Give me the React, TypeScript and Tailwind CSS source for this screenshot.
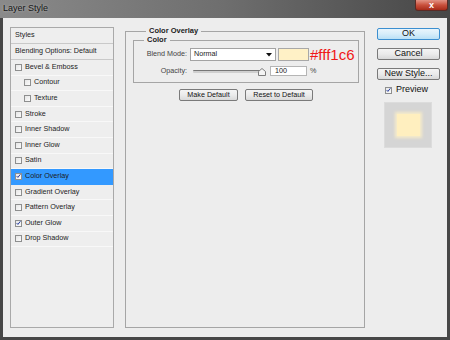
import React from 'react';

const FONT = { fontFamily: '"Liberation Sans", Arial, sans-serif' };

type StyleItem = { label: string; checked?: boolean; indent?: boolean; selected?: boolean };

const styleItems: StyleItem[] = [
  { label: 'Bevel & Emboss' },
  { label: 'Contour', indent: true },
  { label: 'Texture', indent: true },
  { label: 'Stroke' },
  { label: 'Inner Shadow' },
  { label: 'Inner Glow' },
  { label: 'Satin' },
  { label: 'Color Overlay', checked: true, selected: true },
  { label: 'Gradient Overlay' },
  { label: 'Pattern Overlay' },
  { label: 'Outer Glow', checked: true },
  { label: 'Drop Shadow' },
];

const Checkbox = ({ checked }: { checked?: boolean }) => (
  <span className="flex h-[7px] w-[7px] shrink-0 items-center justify-center border border-[#8e8f8f] bg-gradient-to-br from-[#e6e6e6] to-[#fbfbfb]">
    {checked && (
      <svg width="6" height="6" viewBox="0 0 6 6">
        <path d="M0.8 3.1 L2.3 4.7 L5.3 0.9" fill="none" stroke="#21399e" strokeWidth="1.2" />
      </svg>
    )}
  </span>
);

const Button = ({ children, className }: { children: React.ReactNode; className?: string }) => (
  <div
    className={`flex items-center justify-center rounded-[2px] border border-[#7a7a7a] bg-gradient-to-b from-[#f4f4f4] via-[#ebebeb] to-[#d9d9d9] text-[#111] ${className ?? ''}`}
  >
    {children}
  </div>
);

export default function App() {
  return (
    <div className="flex h-[340px] w-[450px] flex-col bg-[#474747]" style={FONT}>
      {/* title bar */}
      <div className="flex h-[18px] shrink-0 items-start justify-between bg-gradient-to-r from-[#8a8a8a] via-[#6e6e6e] to-[#474747]">
        <span className="pl-[3px] pt-[3px] text-[9px] leading-[11px] text-[#151515] [text-shadow:0_0_3px_rgba(255,255,255,0.45)]">
          Layer Style
        </span>
        <div className="mr-[2px] flex h-[11px] w-[33px] items-center justify-center rounded-b-[3px] border border-t-0 border-[#5b2a24] bg-gradient-to-b from-[#e29385] via-[#c9503c] to-[#a72a18]">
          <span className="text-[9px] font-bold leading-[9px] text-white">x</span>
        </div>
      </div>

      {/* body */}
      <div className="mx-[3px] mb-[3px] flex flex-1 bg-[#ededed] pb-[9px] pl-[7px] pr-[7px] pt-[9px]">
        {/* styles list */}
        <div className="flex w-[104px] flex-col border border-[#a9a9a9] bg-[#eeeeee] text-[7.2px] text-[#1c1c1c]">
          <div className="flex h-[16px] items-center border-b border-[#c9c9c9] pl-[4px]">Styles</div>
          <div className="flex h-[16px] items-center border-b border-[#c9c9c9] pl-[4px]">Blending Options: Default</div>
          {styleItems.map((item) => (
            <div
              key={item.label}
              className={`flex h-[15.6px] items-center gap-[3px] border-b ${
                item.selected ? 'border-[#3399ff] bg-[#3399ff]' : 'border-[#f8f8f8]'
              } ${item.indent ? 'pl-[13px]' : 'pl-[4px]'}`}
            >
              <Checkbox checked={item.checked} />
              <span>{item.label}</span>
            </div>
          ))}
        </div>

        {/* main group */}
        <fieldset className="ml-[11px] flex w-[240px] flex-col border border-[#a5a5a5] pl-[7px] pr-[5px]">
          <legend className="ml-[13px] px-[3px] text-[7.5px] font-bold leading-[8px] text-[#1c1c1c]">Color Overlay</legend>
          <fieldset className="mt-[1px] border border-[#a5a5a5] pb-[6px] pt-[4px] text-[7.2px] text-[#1c1c1c]">
            <legend className="ml-[10px] px-[3px] text-[7.5px] font-bold leading-[8px]">Color</legend>
            <div className="flex h-[13px] items-center">
              <span className="w-[53px] text-right text-[#444]">Blend Mode:</span>
              <div className="ml-[3px] flex h-[13px] w-[86px] items-center justify-between border border-[#a3a3a3] bg-white pl-[3px] pr-[3px]">
                <span>Normal</span>
                <svg width="6" height="4" viewBox="0 0 6 4">
                  <path d="M0 0 H6 L3 3.5 Z" fill="#111" />
                </svg>
              </div>
              <div className="ml-[2px] h-[13px] w-[31px] border border-[#a8a8a8] bg-[#fff1c6]" />
              <span className="ml-[1px] text-[15px] leading-[15px] text-[#f01818]">#fff1c6</span>
            </div>
            <div className="mt-[5px] flex h-[10px] items-center">
              <span className="w-[53px] text-right text-[#444]">Opacity:</span>
              <div className="relative ml-[6px] flex h-[10px] w-[74px] items-center">
                <div className="h-[3px] w-[70px] rounded-[1px] border-t border-[#777] bg-[#cfcfcf]" />
                <svg className="absolute left-[65px] top-[2px]" width="8" height="8" viewBox="0 0 8 8">
                  <path d="M0.5 7.5 V3.5 L4 0.5 L7.5 3.5 V7.5 Z" fill="#f4f4f4" stroke="#7d7d7d" strokeWidth="1" />
                </svg>
              </div>
              <div className="ml-[3px] flex h-[10px] w-[37px] items-center border border-[#b5b5b5] bg-white pl-[4px]">100</div>
              <span className="ml-[3px] text-[#444]">%</span>
            </div>
          </fieldset>
          <div className="mt-[6px] flex justify-center gap-[7px] text-[7.2px]">
            <Button className="h-[12px] w-[59px]">Make Default</Button>
            <Button className="h-[12px] w-[68px]">Reset to Default</Button>
          </div>
        </fieldset>

        {/* right column */}
        <div className="ml-[12px] flex w-[63px] flex-col text-[9px] text-[#111]">
          <div className="mt-[1px] flex h-[12px] items-center justify-center rounded-[2px] border border-[#3c8fd0] bg-gradient-to-b from-[#e9f5fc] via-[#d6edfa] to-[#b9e0f6]">
            OK
          </div>
          <Button className="mt-[8px] h-[12px]">Cancel</Button>
          <Button className="mt-[8px] h-[12px]">New Style...</Button>
          <div className="mt-[5px] flex h-[10px] items-center gap-[4px] pl-[8px]">
            <Checkbox checked />
            <span>Preview</span>
          </div>
          <div className="ml-[7px] mt-[7px] flex h-[46px] w-[48px] items-center justify-center border border-[#dcdcdc] bg-[#d5d5d5]">
            <div className="h-[22px] w-[23px] bg-[#ffefbf] shadow-[0_0_3px_2px_rgba(255,241,198,0.8)]" />
          </div>
        </div>
      </div>
    </div>
  );
}
